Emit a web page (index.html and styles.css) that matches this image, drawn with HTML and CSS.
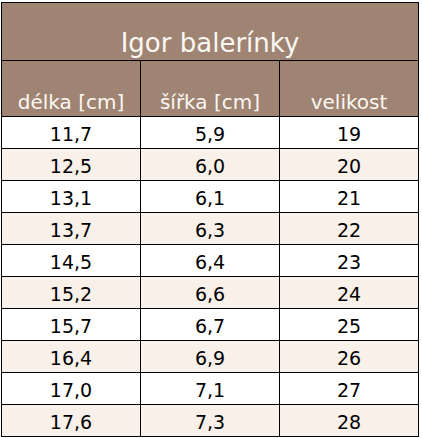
FILE: index.html
```html
<!DOCTYPE html>
<html lang="cs">
<head>
<meta charset="utf-8">
<title>Igor balerínky</title>
<link rel="stylesheet" href="styles.css">
</head>
<body>
<table class="sizes">
  <thead>
    <tr class="title-row"><th colspan="3" class="title">Igor balerínky</th></tr>
    <tr class="head-row">
      <th class="col">délka [cm]</th>
      <th class="col">šířka [cm]</th>
      <th class="col">velikost</th>
    </tr>
  </thead>
  <tbody>
    <tr><td>11,7</td><td>5,9</td><td>19</td></tr>
    <tr class="alt"><td>12,5</td><td>6,0</td><td>20</td></tr>
    <tr><td>13,1</td><td>6,1</td><td>21</td></tr>
    <tr class="alt"><td>13,7</td><td>6,3</td><td>22</td></tr>
    <tr><td>14,5</td><td>6,4</td><td>23</td></tr>
    <tr class="alt"><td>15,2</td><td>6,6</td><td>24</td></tr>
    <tr><td>15,7</td><td>6,7</td><td>25</td></tr>
    <tr class="alt"><td>16,4</td><td>6,9</td><td>26</td></tr>
    <tr><td>17,0</td><td>7,1</td><td>27</td></tr>
    <tr class="alt"><td>17,6</td><td>7,3</td><td>28</td></tr>
  </tbody>
</table>
</body>
</html>
```
FILE: styles.css
```css
html, body {
  margin: 0;
  padding: 0;
  background: #ffffff;
}

body {
  font-family: "DejaVu Sans", Verdana, sans-serif;
}

.sizes {
  margin: 2px 0 0 1px;
  width: 418px;
  border-collapse: collapse;
  table-layout: fixed;
  border: 1px solid #000;
}

.sizes th,
.sizes td {
  border: 1px solid #000;
  padding: 0;
  text-align: center;
  vertical-align: bottom;
}

.title-row th {
  height: 58px;
  background: #9f8473;
  color: #fbf7f2;
  font-weight: normal;
  font-size: 26px;
  line-height: 30px;
  padding-bottom: 2px;
  box-sizing: border-box;
}

.head-row th {
  height: 56px;
  background: #9f8473;
  color: #fbf7f2;
  font-weight: normal;
  font-size: 20px;
  line-height: 24px;
  padding-bottom: 2px;
  box-sizing: border-box;
}

.col:nth-child(1) { width: 140px; }
.col:nth-child(2) { width: 138px; }
.col:nth-child(3) { width: 139px; }

.sizes td {
  height: 32px;
  box-sizing: border-box;
  font-size: 19px;
  line-height: 22px;
  padding-bottom: 3px;
  color: #000;
  background: #ffffff;
}

.sizes tr.alt td {
  background: #f8f0e9;
}
```
